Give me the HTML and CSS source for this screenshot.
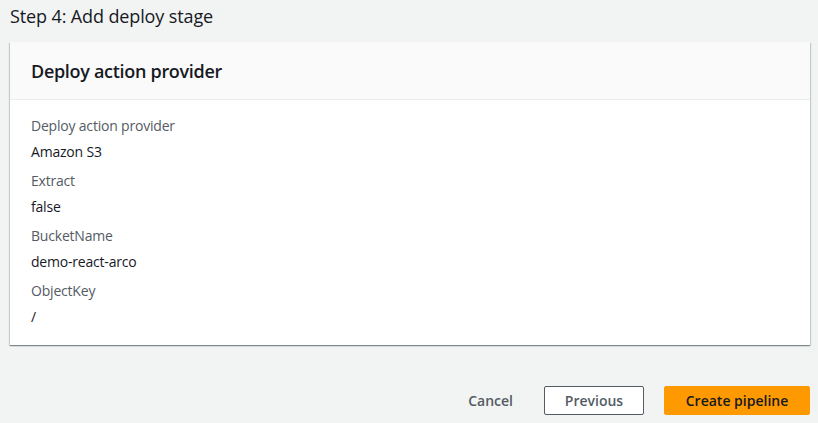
FILE: index.html
```html
<!DOCTYPE html>
<html lang="en">
<head>
<meta charset="utf-8">
<title>Step 4: Add deploy stage</title>
<link rel="stylesheet" href="styles.css">
</head>
<body>
<div class="page">
  <h2 class="step-title">Step 4: Add deploy stage</h2>
  <section class="card">
    <header class="card-header">
      <h3 class="card-title">Deploy action provider</h3>
    </header>
    <div class="card-body">
      <div class="field">
        <div class="field-label">Deploy action provider</div>
        <div class="field-value">Amazon S3</div>
      </div>
      <div class="field">
        <div class="field-label">Extract</div>
        <div class="field-value">false</div>
      </div>
      <div class="field">
        <div class="field-label">BucketName</div>
        <div class="field-value">demo-react-arco</div>
      </div>
      <div class="field">
        <div class="field-label">ObjectKey</div>
        <div class="field-value">/</div>
      </div>
    </div>
  </section>
  <div class="actions">
    <button class="btn btn-link">Cancel</button>
    <button class="btn btn-normal">Previous</button>
    <button class="btn btn-primary">Create pipeline</button>
  </div>
</div>
</body>
</html>
```

FILE: styles.css
```css
html, body {
  margin: 0;
  padding: 0;
  background: #f2f3f3;
}
body {
  font-family: "Open Sans", "Noto Sans", "Liberation Sans", sans-serif;
  color: #16191f;
  width: 818px;
  height: 423px;
  overflow: hidden;
}
.page {
  padding: 0 8px 0 10px;
}
.step-title {
  margin: 0;
  font-size: 18px;
  font-weight: 400;
  line-height: 32px;
  letter-spacing: -0.12px;
  color: #16191f;
}
.card {
  margin-top: 10px;
  background: #ffffff;
  box-shadow: 0 1px 1px 0 rgba(0, 28, 36, 0.3), 1px 1px 1px 0 rgba(0, 28, 36, 0.15), -1px 1px 1px 0 rgba(0, 28, 36, 0.15);
}
.card-header {
  height: 58px;
  box-sizing: border-box;
  background: #fafafa;
  border-bottom: 1px solid #eaeded;
  padding: 0 21px;
  display: flex;
  align-items: center;
}
.card-title {
  margin: 0;
  font-size: 18px;
  font-weight: 600;
  line-height: 22px;
  letter-spacing: -0.3px;
  color: #16191f;
}
.card-body {
  padding: 15px 21px 17px;
  display: flex;
  flex-direction: column;
  gap: 7px;
}
.field-label {
  font-size: 14px;
  line-height: 22px;
  letter-spacing: -0.2px;
  color: #545b64;
}
.field-value {
  margin-top: 4px;
  font-size: 14px;
  line-height: 22px;
  letter-spacing: -0.2px;
  color: #16191f;
}
.actions {
  margin-top: 41px;
  display: flex;
  justify-content: flex-end;
  align-items: center;
  gap: 20px;
}
.btn {
  font-family: inherit;
  font-size: 14px;
  font-weight: 600;
  height: 29px;
  box-sizing: border-box;
  padding: 0;
  border-radius: 2px;
  cursor: pointer;
  line-height: 1;
  white-space: nowrap;
  text-align: center;
}
.btn-link {
  padding: 0 20px;
  margin-right: -10px;
  background: transparent;
  border: 1px solid transparent;
  color: #545b64;
}
.btn-normal {
  width: 100px;
  background: #ffffff;
  border: 1px solid #545b64;
  color: #545b64;
}
.btn-primary {
  width: 146px;
  background: #ff9900;
  border: 1px solid #ff9900;
  color: #16191f;
}
```
